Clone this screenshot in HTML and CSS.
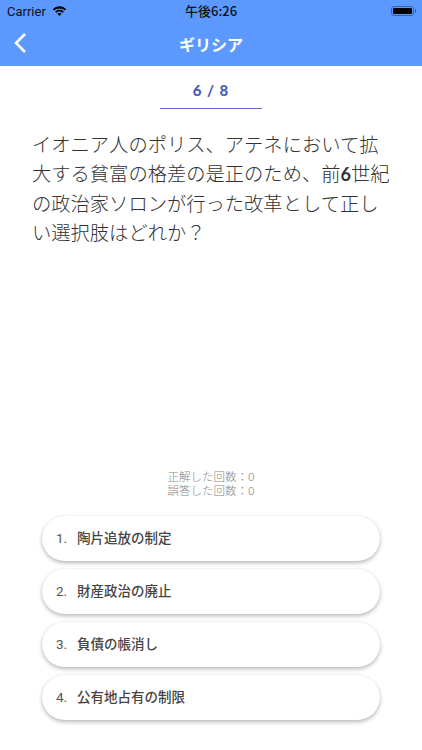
FILE: index.html
```html
<!DOCTYPE html>
<html lang="ja">
<head>
    <meta charset="UTF-8">
    <meta name="viewport" content="width=device-width, initial-scale=1.0">
    <title>ギリシア</title>
    <link rel="stylesheet" href="styles.css">
</head>
<body>
    <div class="page">
        <header class="header">
            <div class="status-bar">
                <div class="status-left">
                    <span>Carrier</span>
                    <svg class="wifi" width="15" height="11" viewBox="0 0 16 12">
                        <path d="M8 2.600c2.300 0 4.400.9 5.900 2.400l1.400-1.500C13.400 1.600 10.800.4 8 .4S2.600 1.600.7 3.500L2.100 5C3.600 3.500 5.700 2.600 8 2.600z" fill="#000"/>
                        <path d="M8 6c1.300 0 2.500.5 3.400 1.400l1.400-1.500C11.500 4.700 9.800 4 8 4S4.500 4.700 3.200 5.900l1.400 1.500C5.500 6.500 6.700 6 8 6z" fill="#000"/>
                        <path d="M8 7.400c-.9 0-1.700.3-2.300.9L8 11l2.300-2.700c-.6-.6-1.400-.9-2.300-.9z" fill="#000"/>
                    </svg>
                </div>
                <span class="status-time">午後6:26</span>
                <div class="battery"><span class="battery-level"></span></div>
            </div>
            <div class="nav-bar">
                <svg class="back" width="14" height="22" viewBox="0 0 14 22">
                    <path d="M12 2L3 11l9 9" fill="none" stroke="#fff" stroke-width="2.600"/>
                </svg>
                <span class="nav-title">ギリシア</span>
            </div>
        </header>

        <main class="content">
            <div class="progress">6 / 8</div>
            <p class="question">イオニア人のポリス、アテネにおいて拡<br>大する貧富の格差の是正のため、前<span class="num">6</span>世紀<br>の政治家ソロンが行った改革として正し<br>い選択肢はどれか？</p>
            <div class="stats">正解した回数：0<br>誤答した回数：0</div>
            <div class="choices">
                <button class="choice"><span class="choice-no">1.</span><span class="choice-text">陶片追放の制定</span></button>
                <button class="choice"><span class="choice-no">2.</span><span class="choice-text">財産政治の廃止</span></button>
                <button class="choice"><span class="choice-no">3.</span><span class="choice-text">負債の帳消し</span></button>
                <button class="choice"><span class="choice-no">4.</span><span class="choice-text">公有地占有の制限</span></button>
            </div>
        </main>
    </div>
</body>
</html>
```

FILE: styles.css
```css
body {
    margin: 0;
    background-color: #fff;
    font-family: "Noto Sans CJK JP", "Noto Sans", sans-serif;
}
.page {
    display: flex;
    flex-direction: column;
    height: 750px;
    overflow: hidden;
}
.header {
    background-color: #5c99ff;
    height: 66px;
    flex-shrink: 0;
}
.status-bar {
    display: flex;
    justify-content: space-between;
    align-items: center;
    height: 21px;
    padding: 1px 6px 0 7px;
    box-sizing: border-box;
    font-size: 13px;
    color: #111;
    position: relative;
}
.status-left {
    display: flex;
    align-items: center;
    gap: 6px;
    font-family: Roboto, sans-serif;
}
.status-time {
    position: absolute;
    left: 185px;
    top: 2px;
    line-height: 18px;
    font-weight: 500;
}
.battery {
    width: 23px;
    height: 10px;
    padding: 1px;
    border: 1px solid #3b62a8;
    border-radius: 3px;
    box-sizing: border-box;
    margin-right: 2px;
    display: flex;
    position: relative;
}
.battery::after {
    content: "";
    position: absolute;
    right: -3px;
    top: 2px;
    width: 1px;
    height: 4px;
    background-color: #3b62a8;
}
.battery-level {
    flex: 1;
    background-color: #000;
    border-radius: 1px;
}
.nav-bar {
    display: flex;
    align-items: center;
    justify-content: center;
    height: 45px;
    position: relative;
}
.back {
    position: absolute;
    left: 13px;
    top: 11px;
}
.nav-title {
    color: #fff;
    font-size: 16px;
    font-weight: 700;
}
.content {
    flex: 1;
    display: flex;
    flex-direction: column;
    min-height: 0;
}
.progress {
    width: 102px;
    height: 43px;
    box-sizing: border-box;
    margin: 0 auto;
    padding-top: 14px;
    border-bottom: 1px solid #5b6cc4;
    text-align: center;
    font-family: Lato, sans-serif;
    font-size: 15px;
    line-height: 20px;
    font-weight: 900;
    letter-spacing: 1px;
    color: #4d5cb5;
}
.question {
    flex: 1;
    margin: 0;
    padding: 21px 20px 0 32px;
    font-size: 19.300px;
    line-height: 29px;
    font-weight: 300;
    color: #333;
    white-space: nowrap;
}
.num {
    font-family: Lato, sans-serif;
    font-size: 18px;
    font-weight: 700;
}
.stats {
    text-align: center;
    font-family: Roboto, "Noto Sans CJK JP", sans-serif;
    font-size: 11.500px;
    line-height: 14px;
    font-weight: 300;
    color: #858585;
    margin-bottom: 18px;
}
.choices {
    display: flex;
    flex-direction: column;
    gap: 8px;
    padding: 0 42px 30px;
}
.choice {
    display: flex;
    align-items: center;
    height: 45px;
    padding: 0 14px 4px;
    border: none;
    border-radius: 23px;
    background-color: #fff;
    box-shadow: 0 2px 4px rgba(0, 0, 0, 0.28), 0 0 2px rgba(0, 0, 0, 0.05);
    font-family: "Noto Sans CJK JP", sans-serif;
    font-size: 13.500px;
    font-weight: 500;
    color: #444;
    text-align: left;
}
.choice-no {
    width: 21px;
    padding-top: 3px;
    font-family: Roboto, sans-serif;
    font-size: 13.500px;
    font-weight: 400;
    color: #555;
}
```
